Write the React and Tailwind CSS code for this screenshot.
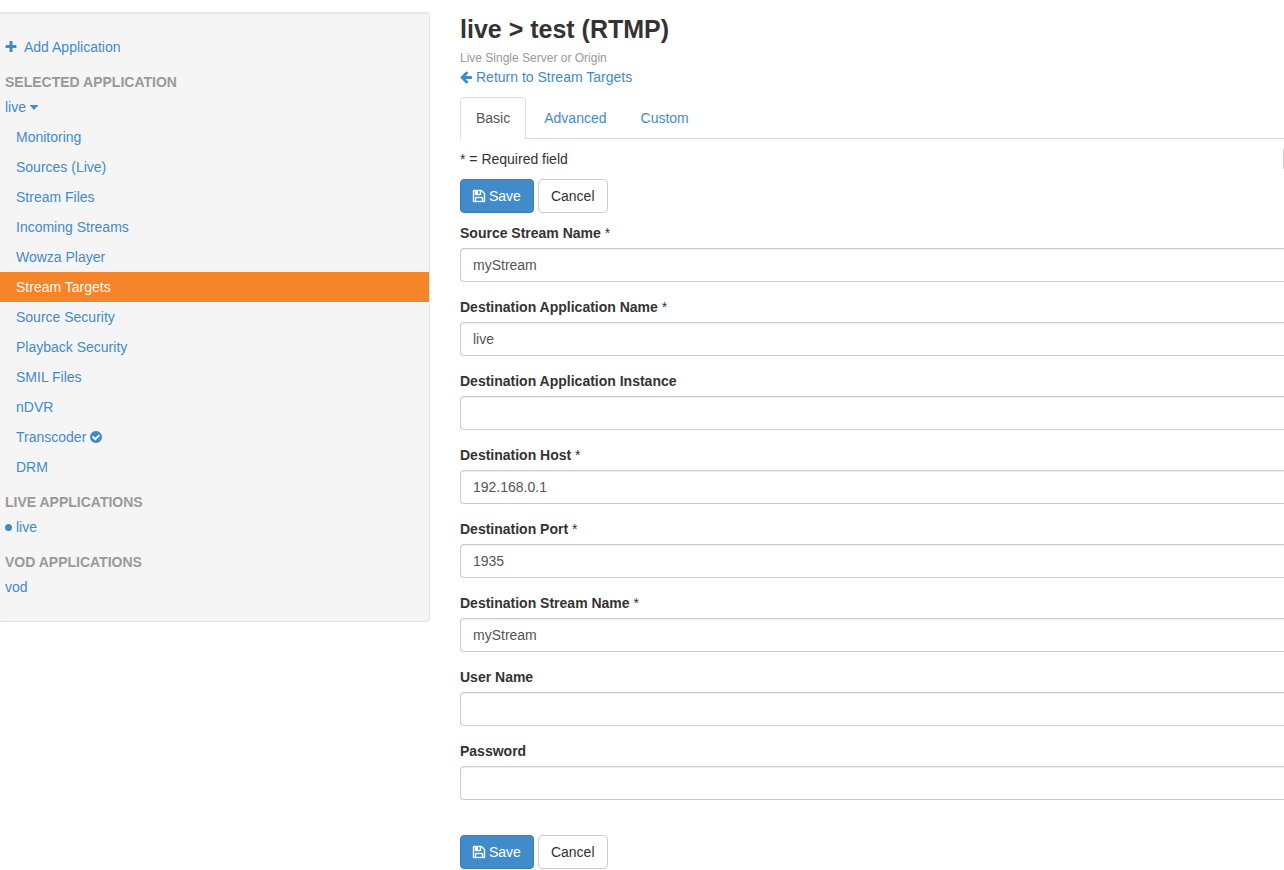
import React from "react";

const ICONS = {
  plus: "M1600 736v192q0 40-28 68t-68 28h-416v416q0 40-28 68t-68 28h-192q-40 0-68-28t-28-68v-416h-416q-40 0-68-28t-28-68v-192q0-40 28-68t68-28h416v-416q0-40 28-68t68-28h192q40 0 68 28t28 68v416h416q40 0 68 28t28 68z",
  arrowLeft:
    "M1664 896v128q0 53-32.5 90.5t-84.5 37.5h-704l293 294q38 36 38 90t-38 90l-75 76q-37 37-90 37-52 0-91-37l-651-652q-37-37-37-90 0-52 37-91l651-650q38-38 91-38 52 0 90 38l75 74q38 38 38 91t-38 91l-293 293h704q52 0 84.5 37.5t32.5 90.5z",
  check:
    "M1412 734q0-28-18-46l-91-90q-19-19-45-19t-45 19l-408 407-226-226q-19-19-45-19t-45 19l-91 90q-18 18-18 46 0 27 18 45l362 362q19 19 45 19 27 0 46-19l543-543q18-18 18-45zm252 162q0 209-103 385.5t-279.5 279.5-385.5 103-385.5-103-279.5-279.5-103-385.5 103-385.5 279.5-279.5 385.5-103 385.5 103 279.5 279.5 103 385.5z",
  floppy:
    "M512 1536h768v-384h-768v384zm896 0h128v-896q0-14-10-38.5t-20-34.5l-281-281q-10-10-34-20t-39-10v416q0 40-28 68t-68 28h-576q-40 0-68-28t-28-68v-416h-128v1280h128v-416q0-40 28-68t68-28h832q40 0 68 28t28 68v416zm-384-928v-320q0-13-9.5-22.5t-22.5-9.5h-192q-13 0-22.5 9.5t-9.5 22.5v320q0 13 9.5 22.5t22.5 9.5h192q13 0 22.5-9.5t9.5-22.5zm640 32v928q0 40-28 68t-68 28h-1344q-40 0-68-28t-28-68v-1344q0-40 28-68t68-28h928q40 0 88 20t76 48l280 280q28 28 48 76t20 88z",
};

function Icon({ name, className = "" }) {
  return (
    <svg
      viewBox="128 0 1536 1792"
      className={`h-3.5 w-3 shrink-0 overflow-visible fill-current ${className}`}
      aria-hidden="true"
    >
      <path d={ICONS[name]} />
    </svg>
  );
}

const MENU = [
  "Monitoring",
  "Sources (Live)",
  "Stream Files",
  "Incoming Streams",
  "Wowza Player",
  "Stream Targets",
  "Source Security",
  "Playback Security",
  "SMIL Files",
  "nDVR",
  "Transcoder",
  "DRM",
];

const FIELDS = [
  { id: "source-stream", label: "Source Stream Name", required: true, value: "myStream" },
  { id: "dest-app", label: "Destination Application Name", required: true, value: "live" },
  { id: "dest-instance", label: "Destination Application Instance", value: "" },
  { id: "dest-host", label: "Destination Host", required: true, value: "192.168.0.1" },
  { id: "dest-port", label: "Destination Port", required: true, value: "1935" },
  { id: "dest-stream", label: "Destination Stream Name", required: true, value: "myStream" },
  { id: "user-name", label: "User Name", value: "" },
  { id: "password", label: "Password", value: "", type: "password" },
];

function SideHeading({ children }) {
  return <h2 className="px-[5px] pt-2.5 font-bold text-[#999]">{children}</h2>;
}

function Sidebar() {
  return (
    <nav className="mt-3 w-[430px] shrink-0 self-start rounded-r border border-l-0 border-[#e3e3e3] bg-[#f5f5f5] py-[19px] text-[#428bca] shadow-[inset_0_1px_1px_rgba(0,0,0,0.05)]">
      <a href="#add" className="flex h-[30px] items-center gap-[7px] px-[5px]">
        <Icon name="plus" />
        Add Application
      </a>
      <SideHeading>SELECTED APPLICATION</SideHeading>
      <a href="#selected" className="flex h-[30px] items-center gap-1 px-[5px]">
        live
        <svg viewBox="0 0 8 5" className="h-[5px] w-2 fill-current" aria-hidden="true">
          <path d="M0 0h8v.6L4.4 4.6q-.4.4-.8 0L0 .6z" />
        </svg>
      </a>
      <ul>
        {MENU.map((item) => (
          <li key={item}>
            <a
              href="#menu"
              className={`flex h-[30px] items-center gap-1 px-4 ${
                item === "Stream Targets" ? "bg-[#f68428] text-white" : ""
              }`}
            >
              {item}
              {item === "Transcoder" && <Icon name="check" />}
            </a>
          </li>
        ))}
      </ul>
      <SideHeading>LIVE APPLICATIONS</SideHeading>
      <a href="#live" className="flex h-[30px] items-center gap-1 px-[5px]">
        <svg viewBox="0 0 7 7" className="h-[7px] w-[7px] fill-current" aria-hidden="true">
          <circle cx="3.5" cy="3.5" r="3.5" />
        </svg>
        live
      </a>
      <SideHeading>VOD APPLICATIONS</SideHeading>
      <a href="#vod" className="flex h-[30px] items-center px-[5px]">
        vod
      </a>
    </nav>
  );
}

function Actions() {
  return (
    <div className="flex gap-1">
      <button
        type="submit"
        className="flex h-[34px] items-center gap-1 rounded border border-[#357ebd] bg-[#428bca] px-3 text-white"
      >
        <Icon name="floppy" className="stroke-current stroke-[50]" />
        Save
      </button>
      <button type="button" className="h-[34px] rounded border border-[#ccc] bg-white px-3">
        Cancel
      </button>
    </div>
  );
}

function Tabs() {
  return (
    <div className="mt-2.5 flex gap-0.5 border-b border-[#ddd] text-[#428bca]">
      <a
        href="#basic"
        className="-mb-px rounded-t border border-b-0 border-[#ddd] bg-white px-[15px] pt-2.5 pb-[11px] text-[#555]"
      >
        Basic
      </a>
      <a href="#advanced" className="px-4 pt-[11px] pb-2.5">
        Advanced
      </a>
      <a href="#custom" className="px-4 pt-[11px] pb-2.5">
        Custom
      </a>
    </div>
  );
}

export default function App() {
  return (
    <div className="flex gap-[30px] bg-white font-['Liberation_Sans',Arial,sans-serif] text-[14px] leading-5 text-[#333]">
      <Sidebar />
      <main className="min-w-0 flex-1 pt-3">
        <h1 className="pb-[3px] text-[25px] leading-[34px] font-bold">live &gt; test (RTMP)</h1>
        <p className="text-[12px] leading-[18px] text-[#999]">Live Single Server or Origin</p>
        <a href="#targets" className="flex items-center gap-1 text-[#428bca]">
          <Icon name="arrowLeft" />
          Return to Stream Targets
        </a>
        <Tabs />
        <form>
          <div className="flex justify-between py-2.5">
            <p>* = Required field</p>
            <div className="w-px bg-[#ccc]" />
          </div>
          <Actions />
          <div className="flex flex-col gap-[15px] pt-2.5 pb-[35px]">
            {FIELDS.map((field) => (
              <div key={field.id} className="flex flex-col gap-[5px]">
                <label htmlFor={field.id} className="font-bold">
                  {field.label}
                  {field.required && <span className="font-normal"> *</span>}
                </label>
                <input
                  id={field.id}
                  type={field.type || "text"}
                  defaultValue={field.value}
                  className="h-[34px] w-full rounded-l border border-r-0 border-[#ccc] bg-white px-3 text-[#555] shadow-[inset_0_1px_1px_rgba(0,0,0,0.075)] outline-none focus:border-[#66afe9]"
                />
              </div>
            ))}
          </div>
          <Actions />
        </form>
      </main>
    </div>
  );
}
